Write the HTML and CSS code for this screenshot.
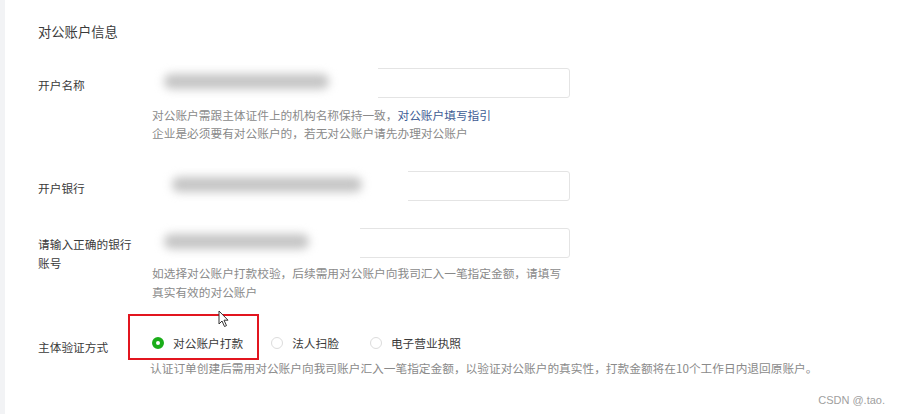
FILE: index.html
```html
<!DOCTYPE html>
<html lang="zh-CN">
<head>
<meta charset="utf-8">
<title>对公账户信息</title>
<link rel="stylesheet" href="styles.css">
</head>
<body>
<div class="page">
  <div class="edge"></div>
  <main class="content">
    <h2 class="section-title">对公账户信息</h2>

    <div class="form-row row-name">
      <div class="label">开户名称</div>
      <div class="field">
        <div class="input-wrap">
          <div class="input"></div>
          <div class="mask mask-name"><span class="smudge"></span></div>
        </div>
        <p class="help">对公账户需跟主体证件上的机构名称保持一致，<a class="link">对公账户填写指引</a><br>企业是必须要有对公账户的，若无对公账户请先办理对公账户</p>
      </div>
    </div>

    <div class="form-row row-bank">
      <div class="label">开户银行</div>
      <div class="field">
        <div class="input-wrap">
          <div class="input"></div>
          <div class="mask mask-bank"><span class="smudge"></span></div>
        </div>
      </div>
    </div>

    <div class="form-row row-account">
      <div class="label label-two">请输入正确的银行<br>账号</div>
      <div class="field">
        <div class="input-wrap">
          <div class="input"></div>
          <div class="mask mask-account"><span class="smudge"></span></div>
        </div>
        <p class="help help-account">如选择对公账户打款校验，后续需用对公账户向我司汇入一笔指定金额，请填写<br>真实有效的对公账户</p>
      </div>
    </div>

    <div class="form-row row-verify">
      <div class="label label-verify">主体验证方式</div>
      <div class="field">
        <div class="radio-group">
          <span class="highlight"></span>
          <svg class="cursor" width="12" height="18" viewBox="0 0 12 18"><path d="M1 1 L1 14 L4 11 L6.5 16.5 L8.5 15.6 L6 10.2 L10 10.2 Z" fill="#fff" stroke="#333" stroke-width="1" stroke-linejoin="round"/></svg>
          <label class="radio checked"><span class="dot"></span><span class="radio-text">对公账户打款</span></label>
          <label class="radio"><span class="dot"></span><span class="radio-text">法人扫脸</span></label>
          <label class="radio"><span class="dot"></span><span class="radio-text">电子营业执照</span></label>
        </div>
        <p class="help help-verify">认证订单创建后需用对公账户向我司账户汇入一笔指定金额，以验证对公账户的真实性，打款金额将在10个工作日内退回原账户。</p>
      </div>
    </div>
  </main>
  <div class="watermark">CSDN @.tao.</div>
</div>
</body>
</html>
```

FILE: styles.css
```css
* { box-sizing: border-box; }
html, body { margin: 0; padding: 0; background: #fff; }
body {
  font-family: "Noto Sans CJK SC", "Noto Sans", "Liberation Sans", sans-serif;
  color: #3a3a3a;
}
.page {
  position: relative;
  display: flex;
  width: 899px;
  height: 414px;
  overflow: hidden;
}
.edge {
  width: 5px;
  flex: none;
  background: #f2f3f5;
}
.content {
  flex: 1;
  padding-left: 33px;
}
.section-title {
  margin: 22px 0 26px;
  font-size: 13.3px;
  line-height: 20px;
  font-weight: normal;
  color: #3a3a3a;
}
.form-row {
  display: grid;
  grid-template-columns: 114px 418px;
}
.row-bank { margin-top: 29px; }
.row-account { margin-top: 27px; }
.row-verify { margin-top: 32px; }
.label {
  font-size: 11.7px;
  line-height: 18px;
  padding-top: 8px;
  color: #3a3a3a;
}
.label-two { line-height: 19px; padding-top: 6px; }
.label-verify { padding-top: 5px; }
.input-wrap { position: relative; height: 30px; }
.input {
  height: 30px;
  border: 1px solid #e4e4e4;
  border-radius: 3px;
  background: #fff;
}
.mask {
  position: absolute;
  top: -8px;
  left: 0;
  height: 44px;
  background: #fff;
  overflow: hidden;
}
.mask-name { width: 226px; }
.mask-bank { width: 256px; }
.mask-account { width: 208px; }
.smudge {
  position: absolute;
  top: 14px;
  left: 12px;
  height: 15px;
  border-radius: 7px;
  background: #c4c4c4;
  filter: blur(5px);
}
.mask-name .smudge { width: 165px; }
.mask-bank .smudge { width: 190px; left: 20px; }
.mask-account .smudge { width: 145px; left: 12px; }
.help {
  margin: 8px 0 0;
  font-size: 11.7px;
  line-height: 18px;
  color: #8a8a8a;
  white-space: nowrap;
}
.help-account { margin-top: 5px; line-height: 19px; }
.link { color: #3e5c94; text-decoration: none; }
.radio-group {
  position: relative;
  display: flex;
  align-items: center;
  height: 20px;
}
.radio {
  display: flex;
  align-items: center;
  margin-right: 28px;
  font-size: 11.7px;
  line-height: 20px;
  color: #3a3a3a;
}
.radio + .radio + .radio { margin-left: 3px; }
.dot {
  width: 12px;
  height: 12px;
  border-radius: 50%;
  border: 1px solid #dcdcdc;
  background: #fff;
  margin-right: 9px;
  flex: none;
}
.radio.checked .dot {
  border: 4px solid #1aad19;
  background: #fff;
}
.highlight {
  position: absolute;
  left: -24px;
  top: -19px;
  width: 131px;
  height: 46px;
  border: 2px solid #e2151f;
  pointer-events: none;
}
.cursor {
  position: absolute;
  left: 66px;
  top: -23px;
}
.help-verify { margin-top: 6px; margin-left: -2px; }
.watermark {
  position: absolute;
  right: 14px;
  bottom: 8px;
  font-family: "Liberation Sans", sans-serif;
  font-size: 11px;
  color: #a0a0a0;
}
```
